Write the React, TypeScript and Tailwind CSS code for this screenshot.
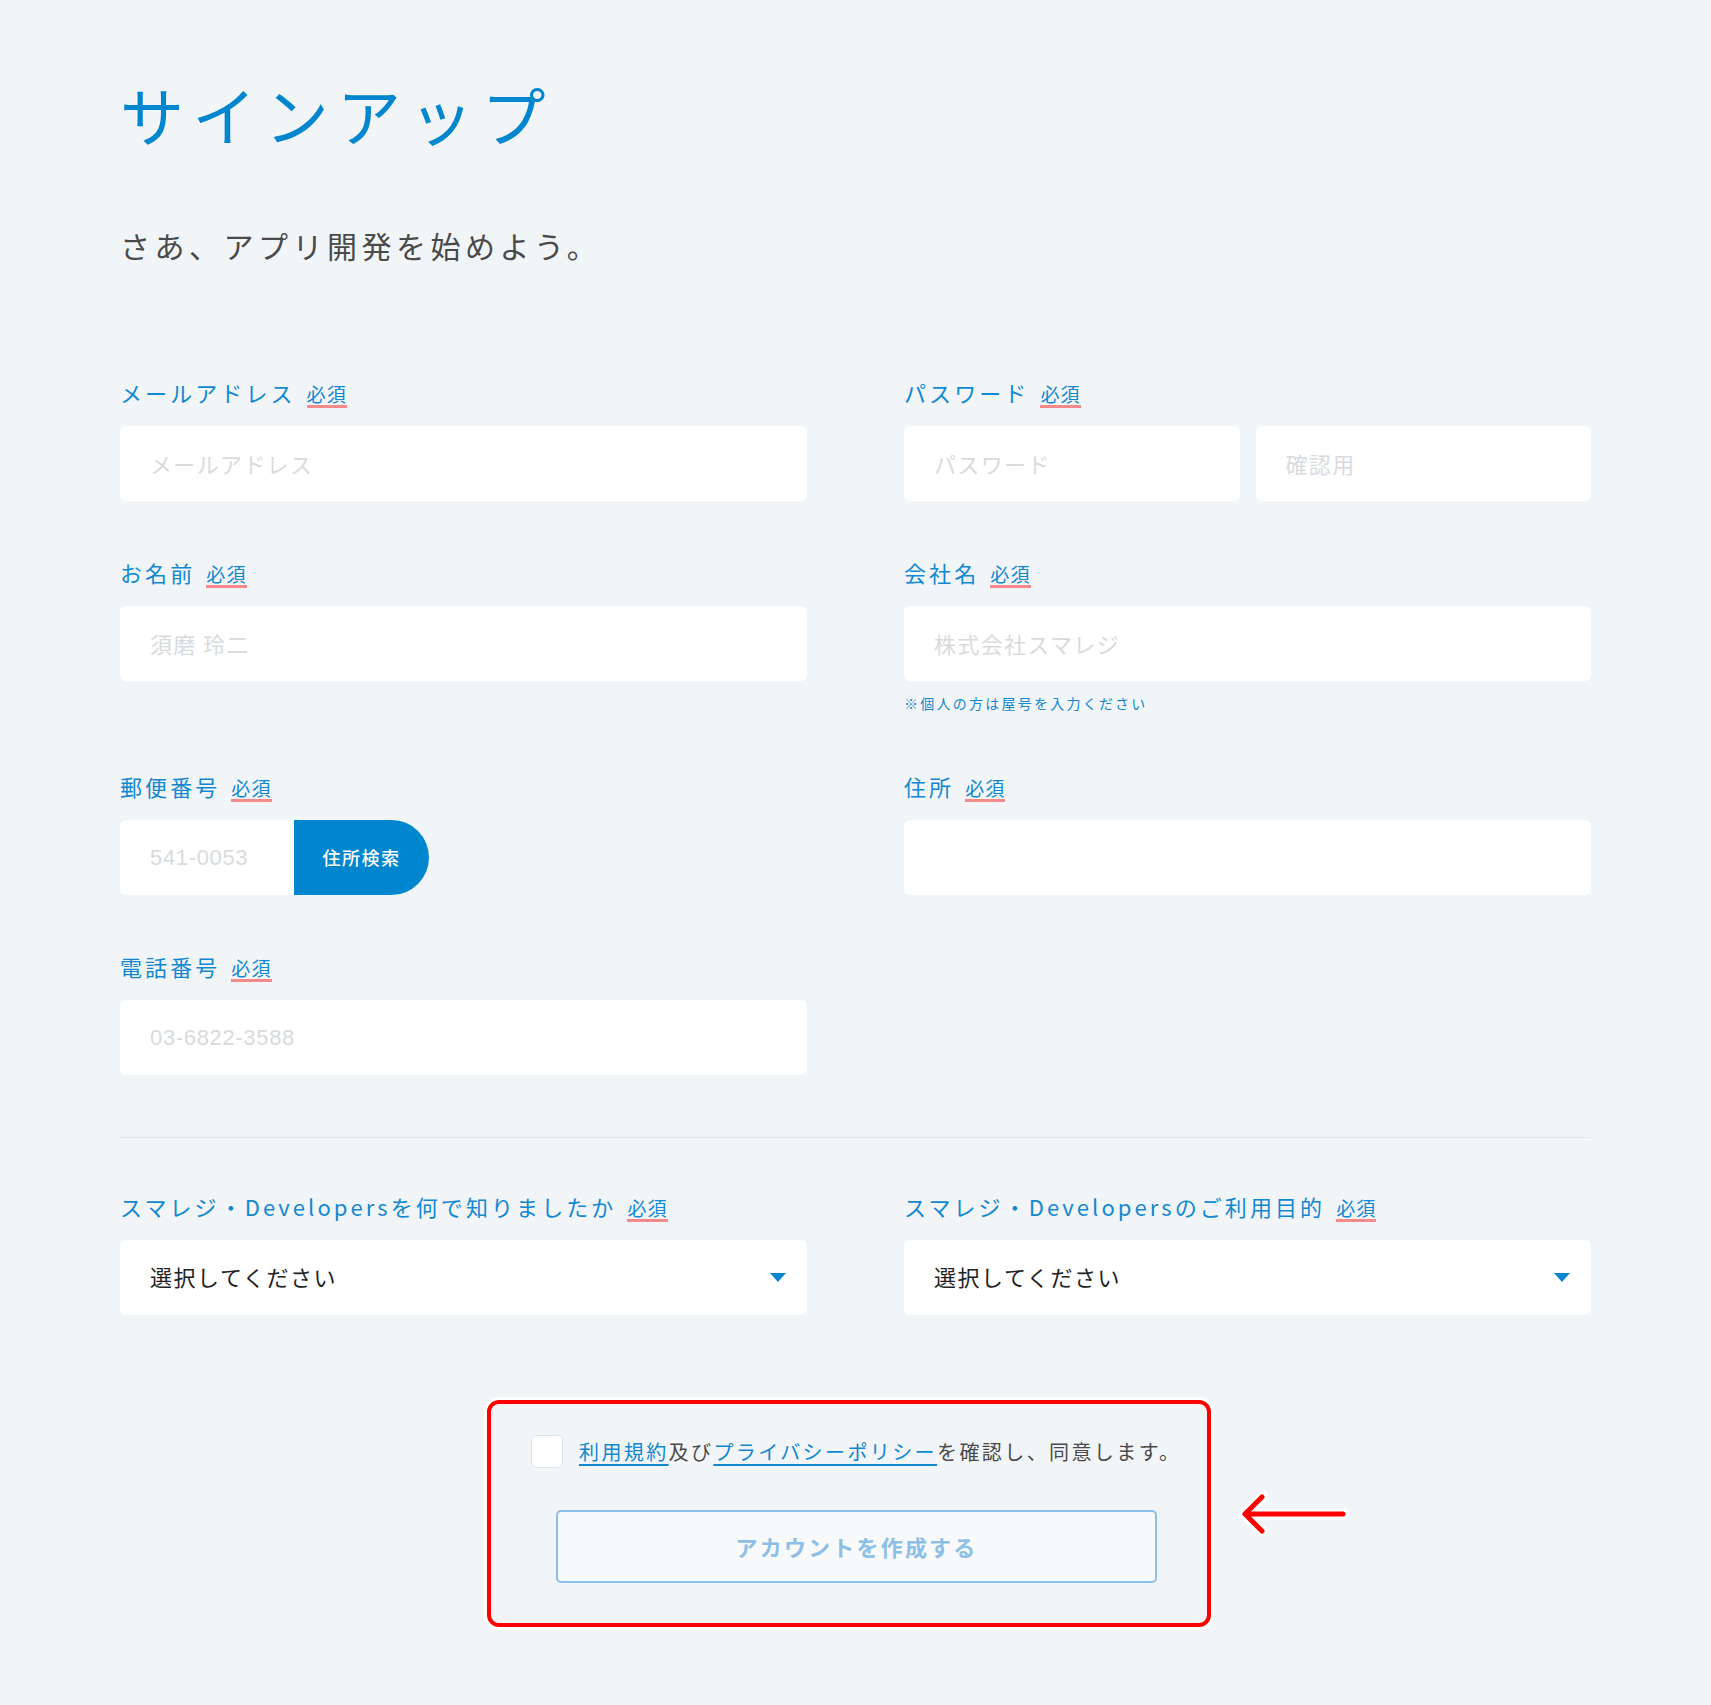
import React from "react";

const FONT = "font-['Noto_Sans_CJK_JP','Noto_Sans',sans-serif]";

function Label({ text }: { text: string }) {
  return (
    <div className="flex items-center h-[28px] mb-[20px]">
      <span className="text-[22px] leading-[28px] tracking-[0.14em] text-[#1288d0]">{text}</span>
      <span className="ml-[11px] mt-[6px] text-[19px] leading-[22px] tracking-[0.06em] text-[#1288d0] border-b-[3px] border-[#f48a8a]">
        必須
      </span>
    </div>
  );
}

function Input({ placeholder, latin = false, className = "" }: { placeholder?: string; latin?: boolean; className?: string }) {
  return (
    <div className={`h-[75px] bg-white rounded-[6px] flex items-center pl-[30px] ${className}`}>
      {placeholder ? (
        <span
          className={
            latin
              ? "font-['Liberation_Sans',sans-serif] text-[22px] tracking-[0.03em] text-[#d8dbde]"
              : "text-[22px] tracking-[0.06em] text-[#d8dbde]"
          }
        >
          {placeholder}
        </span>
      ) : null}
    </div>
  );
}

function Select() {
  return (
    <div className="h-[75px] bg-white rounded-[6px] flex items-center justify-between pl-[30px] pr-[21px]">
      <span className="text-[22px] tracking-[0.07em] text-[#222222] -mt-[2px]">選択してください</span>
      <svg width="16" height="9" viewBox="0 0 16 9">
        <polygon points="0,0 16,0 8,9" fill="#0a86d0" />
      </svg>
    </div>
  );
}

export default function App() {
  return (
    <div className={`min-h-[1705px] bg-[#f1f5f8] ${FONT}`}>
      <div className="px-[120px] pt-[81px]">
        <h1 className="text-[64px] leading-[64px] tracking-[0.13em] text-[#0086cf] font-normal">サインアップ</h1>
        <p className="mt-[85px] text-[30px] leading-[30px] tracking-[0.15em] text-[#4a4a4a]">さあ、アプリ開発を始めよう。</p>

        <div className="mt-[118px] grid grid-cols-2 gap-x-[97px] gap-y-[57px]">
          {/* Row 1 */}
          <div>
            <Label text="メールアドレス" />
            <Input placeholder="メールアドレス" />
          </div>
          <div>
            <Label text="パスワード" />
            <div className="grid grid-cols-2 gap-[16px]">
              <Input placeholder="パスワード" />
              <Input placeholder="確認用" />
            </div>
          </div>

          {/* Row 2 */}
          <div>
            <Label text="お名前" />
            <Input placeholder="須磨 玲二" />
          </div>
          <div>
            <Label text="会社名" />
            <Input placeholder="株式会社スマレジ" />
            <div className="mt-[11px] h-[23px] text-[14px] leading-[23px] tracking-[0.16em] text-[#1288d0]">
              ※個人の方は屋号を入力ください
            </div>
          </div>

          {/* Row 3 */}
          <div>
            <Label text="郵便番号" />
            <div className="flex">
              <div className="w-[174px] h-[75px] bg-white rounded-l-[6px] flex items-center pl-[30px]">
                <span className="font-['Liberation_Sans',sans-serif] text-[22px] tracking-[0.03em] text-[#d8dbde]">541-0053</span>
              </div>
              <button className="w-[135px] h-[75px] bg-[#0085cf] rounded-r-full flex items-center justify-center text-white text-[18px] tracking-[0.08em] font-medium">
                住所検索
              </button>
            </div>
          </div>
          <div>
            <Label text="住所" />
            <Input />
          </div>

          {/* Row 4 */}
          <div>
            <Label text="電話番号" />
            <Input placeholder="03-6822-3588" latin />
          </div>
          <div />
        </div>

        <div className="mt-[62px] h-px bg-[#e3e8ed]" />

        <div className="mt-[54px] grid grid-cols-2 gap-x-[97px]">
          <div>
            <Label text="スマレジ・Developersを何で知りましたか" />
            <Select />
          </div>
          <div>
            <Label text="スマレジ・Developersのご利用目的" />
            <Select />
          </div>
        </div>

        <div className="relative mt-[85px] ml-[367px] w-[724px] border-[4px] border-[#ff0000] rounded-[12px] ring-[3px] ring-white">
          <div className="pt-[31px] pl-[40px] flex items-center">
            <div className="w-[32px] h-[33px] bg-white border border-[#e1e4e7] rounded-[5px]" />
            <div className="ml-[16px] text-[20px] tracking-[0.12em] text-[#4a4a4a]">
              <span className="text-[#1288d0] underline underline-offset-[4px] decoration-[1.5px]">利用規約</span>
              及び
              <span className="text-[#1288d0] underline underline-offset-[4px] decoration-[1.5px]">プライバシーポリシー</span>
              を確認し、同意します。
            </div>
          </div>
          <div className="mt-[42px] mb-[40px] ml-[65px] w-[601px] h-[73px] border-2 border-[#8dc0e6] rounded-[5px] bg-[#f7f9fb] flex items-center justify-center">
            <span className="text-[22px] font-bold tracking-[0.1em] text-[#8dc0e6]">アカウントを作成する</span>
          </div>

          <svg className="absolute left-[746px] top-[88px]" width="116" height="44" viewBox="0 0 116 44">
            <g fill="none" strokeLinecap="round" strokeLinejoin="round">
              <path d="M106 22 H8 M25 5 L8 22 L25 39" stroke="#ffffff" strokeWidth="12" />
              <path d="M106 22 H8 M25 5 L8 22 L25 39" stroke="#ff0000" strokeWidth="5" />
            </g>
          </svg>
        </div>
      </div>
    </div>
  );
}
